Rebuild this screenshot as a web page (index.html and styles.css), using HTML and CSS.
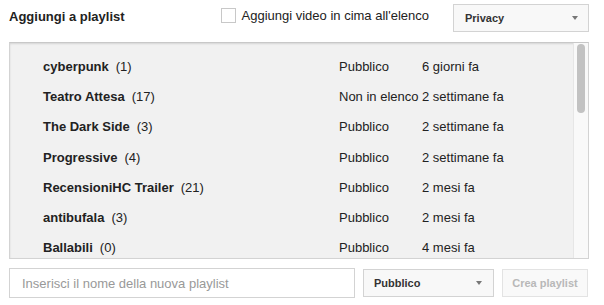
FILE: index.html
```html
<!DOCTYPE html>
<html lang="it">
<head>
<meta charset="utf-8">
<link rel="stylesheet" href="styles.css">
</head>
<body>
<div class="panel">
  <div class="header">
    <div class="title">Aggiungi a playlist</div>
    <label class="check">
      <span class="box"></span>
      <span class="check-label">Aggiungi video in cima all'elenco</span>
    </label>
    <div class="select select-privacy">
      <span class="select-text">Privacy</span>
      <span class="arrow"></span>
    </div>
  </div>

  <div class="list">
    <div class="rows">
      <div class="row"><span class="name"><b>cyberpunk</b><span class="count">(1)</span></span><span class="priv">Pubblico</span><span class="date">6 giorni fa</span></div>
      <div class="row"><span class="name"><b>Teatro Attesa</b><span class="count">(17)</span></span><span class="priv">Non in elenco</span><span class="date">2 settimane fa</span></div>
      <div class="row"><span class="name"><b>The Dark Side</b><span class="count">(3)</span></span><span class="priv">Pubblico</span><span class="date">2 settimane fa</span></div>
      <div class="row"><span class="name"><b>Progressive</b><span class="count">(4)</span></span><span class="priv">Pubblico</span><span class="date">2 settimane fa</span></div>
      <div class="row"><span class="name"><b>RecensioniHC Trailer</b><span class="count">(21)</span></span><span class="priv">Pubblico</span><span class="date">2 mesi fa</span></div>
      <div class="row"><span class="name"><b>antibufala</b><span class="count">(3)</span></span><span class="priv">Pubblico</span><span class="date">2 mesi fa</span></div>
      <div class="row"><span class="name"><b>Ballabili</b><span class="count">(0)</span></span><span class="priv">Pubblico</span><span class="date">4 mesi fa</span></div>
    </div>
    <div class="scrollbar"><div class="thumb"></div></div>
  </div>

  <div class="footer">
    <div class="input"><span class="placeholder">Inserisci il nome della nuova playlist</span></div>
    <div class="select select-pub">
      <span class="select-text">Pubblico</span>
      <span class="arrow"></span>
    </div>
    <div class="button">Crea playlist</div>
  </div>
</div>
</body>
</html>
```

FILE: styles.css
```css
* { box-sizing: border-box; }
html, body { margin: 0; padding: 0; background: #fff; }
body {
  font-family: "Liberation Sans", Arial, sans-serif;
  font-size: 13px;
  color: #222;
  width: 604px;
  height: 305px;
  overflow: hidden;
}
.panel { padding: 0 15px 0 9px; }

.header {
  display: flex;
  align-items: flex-start;
  height: 42px;
  padding-top: 4px;
}
.title {
  font-weight: bold;
  font-size: 13px;
  line-height: 15px;
  margin-top: 5px;
  color: #222;
}
.check {
  display: flex;
  align-items: center;
  margin-left: auto;
  margin-top: 4px;
  height: 15px;
}
.box {
  width: 15px;
  height: 15px;
  border: 1px solid #c8c8c8;
  background: #fff;
  margin-right: 6px;
}
.check-label { line-height: 15px; color: #222; }

.select {
  display: flex;
  align-items: center;
  justify-content: space-between;
  height: 28px;
  border: 1px solid #d3d3d3;
  background: #f8f8f8;
  padding: 0 10px 0 11px;
}
.select-text {
  font-weight: bold;
  font-size: 11px;
  color: #333;
}
.arrow {
  width: 0;
  height: 0;
  border-left: 3px solid transparent;
  border-right: 3px solid transparent;
  border-top: 4px solid #777;
}
.select-privacy { width: 136px; margin-left: 24px; }

.list {
  display: flex;
  height: 217px;
  border: 1px solid #d3d3d3;
  border-top-color: #c8c8c8;
  background: #f1f1f1;
  box-shadow: inset 0 1px 2px rgba(0,0,0,0.12);
  overflow: hidden;
}
.rows {
  flex: 1;
  padding: 9px 0 0 33px;
}
.row {
  display: grid;
  grid-template-columns: 296px 83px auto;
  height: 30.2px;
  line-height: 30px;
  white-space: nowrap;
  color: #222;
}
.name b { font-weight: bold; }
.count { margin-left: 7px; }

.scrollbar {
  width: 15px;
  border-left: 1px solid #e6e6e6;
  background: #f9f9f9;
  padding: 1px 3px 0 3px;
}
.thumb {
  width: 8px;
  height: 69px;
  border-radius: 4px;
  background: #c2c2c2;
}

.footer {
  display: flex;
  align-items: center;
  margin-top: 9px;
  gap: 8px;
}
.input {
  width: 346px;
  height: 30px;
  border: 1px solid #d3d3d3;
  background: #fff;
  display: flex;
  align-items: center;
  padding-left: 12px;
}
.placeholder { color: #999; }
.select-pub { width: 131px; padding-left: 10px; padding-right: 11px; }
.button {
  width: 86px;
  height: 28px;
  border: 1px solid #e3e3e3;
  background: #f9f9f9;
  color: #b8b8b8;
  font-weight: bold;
  font-size: 11px;
  display: flex;
  align-items: center;
  justify-content: center;
}
```
